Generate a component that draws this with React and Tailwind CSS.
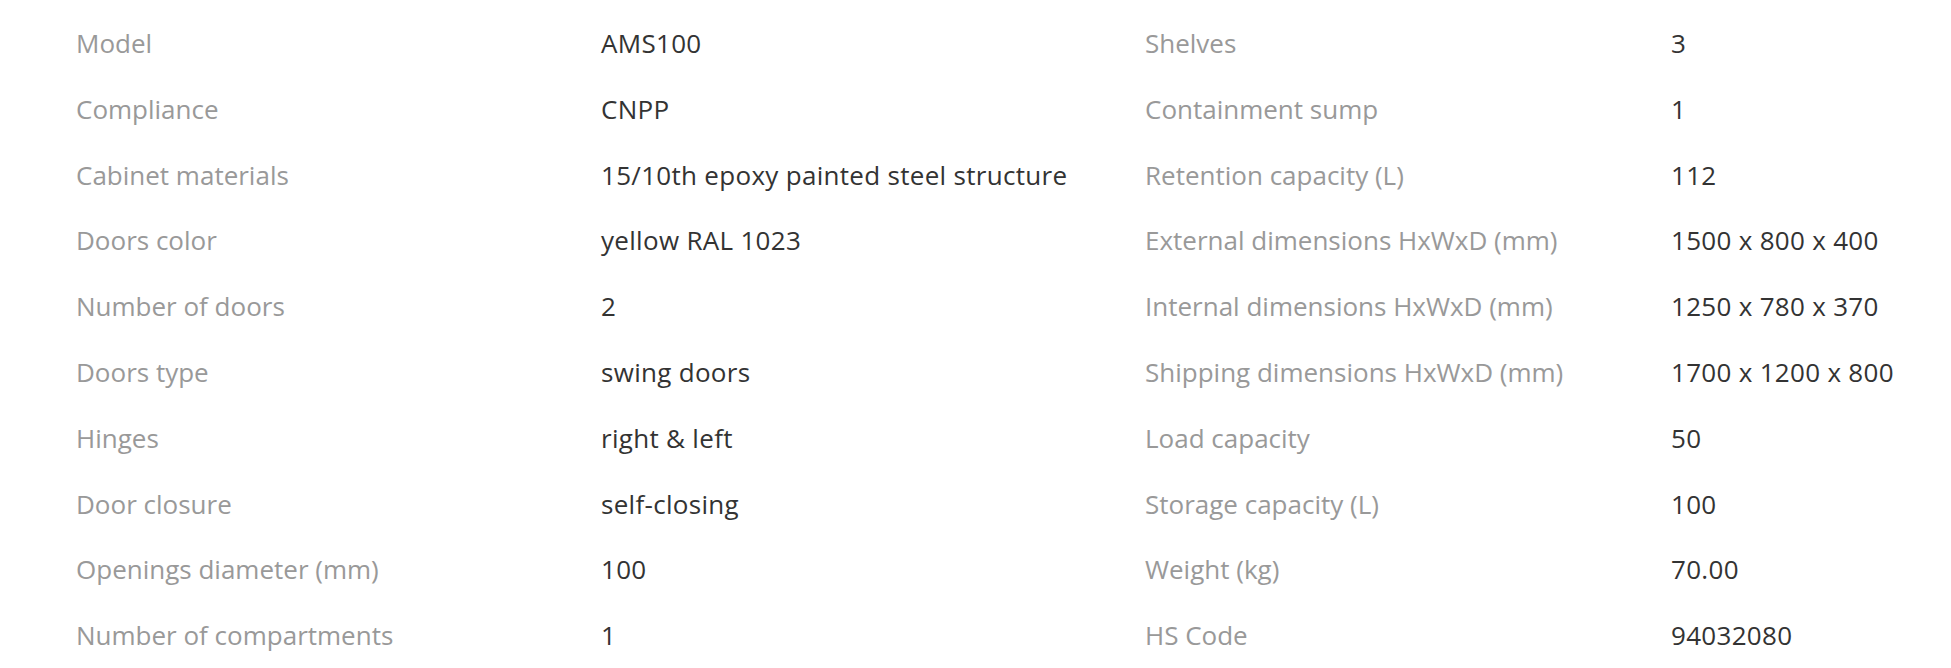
const left = [
  ['Model', 'AMS100'],
  ['Compliance', 'CNPP'],
  ['Cabinet materials', '15/10th epoxy painted steel structure'],
  ['Doors color', 'yellow RAL 1023'],
  ['Number of doors', '2'],
  ['Doors type', 'swing doors'],
  ['Hinges', 'right & left'],
  ['Door closure', 'self-closing'],
  ['Openings diameter (mm)', '100'],
  ['Number of compartments', '1'],
];

const right = [
  ['Shelves', '3'],
  ['Containment sump', '1'],
  ['Retention capacity (L)', '112'],
  ['External dimensions HxWxD (mm)', '1500 x 800 x 400'],
  ['Internal dimensions HxWxD (mm)', '1250 x 780 x 370'],
  ['Shipping dimensions HxWxD (mm)', '1700 x 1200 x 800'],
  ['Load capacity', '50'],
  ['Storage capacity (L)', '100'],
  ['Weight (kg)', '70.00'],
  ['HS Code', '94032080'],
];

const SpecRow = ({ label, value }) => (
  <div className="contents">
    <div className="h-[65.8px] flex items-center text-[#999999]">{label}</div>
    <div className="h-[65.8px] flex items-center text-[#333333] font-medium tracking-[0.3px]">{value}</div>
  </div>
);

export default function App() {
  return (
    <div className="bg-white w-[1951px] h-[668px] overflow-hidden font-['Open_Sans',sans-serif] text-[26px] pt-[10.6px] pl-[76px]">
      <div className="grid grid-cols-[525px_544px_526px_1fr]">
        {left.map((row, i) => (
          <div key={i} className="contents">
            <SpecRow label={row[0]} value={row[1]} />
            <SpecRow label={right[i][0]} value={right[i][1]} />
          </div>
        ))}
      </div>
    </div>
  );
}
